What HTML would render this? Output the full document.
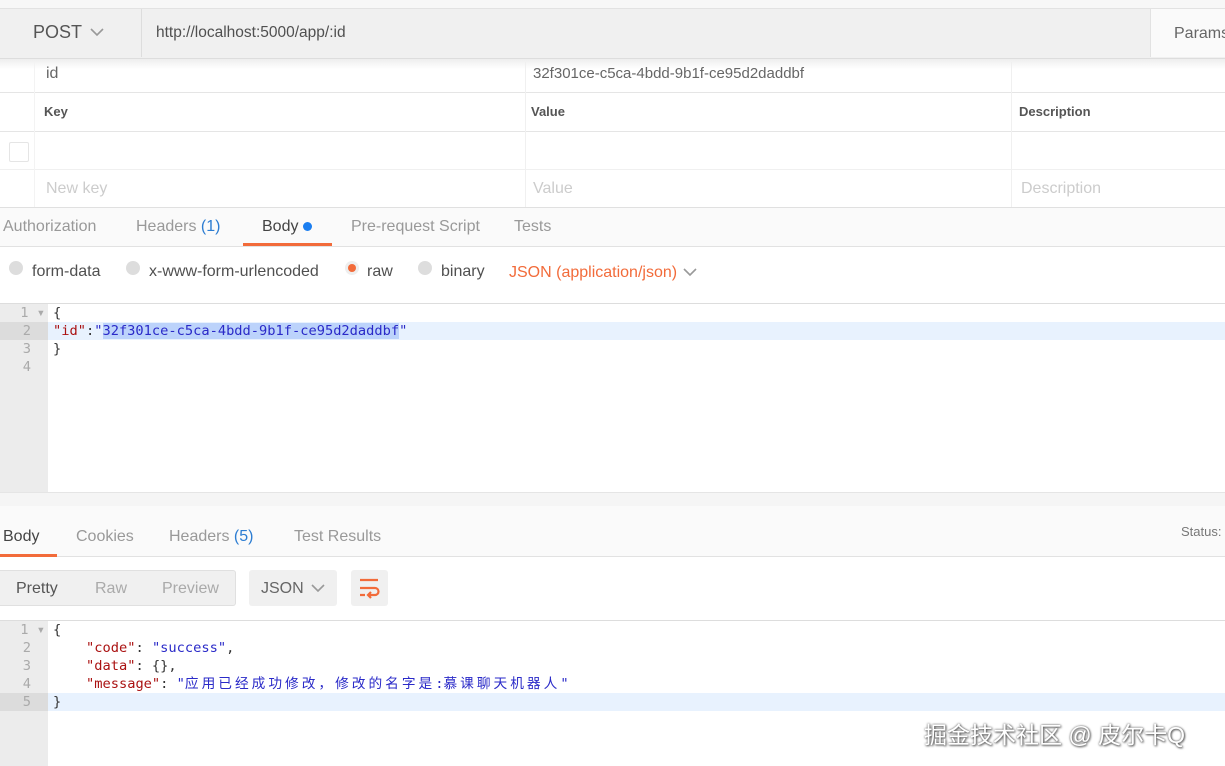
<!DOCTYPE html>
<html><head><meta charset="utf-8"><style>
body{margin:0;width:1225px;height:766px;overflow:hidden;background:#fff;font-family:"Liberation Sans","Noto Sans CJK SC",sans-serif;position:relative;font-size:16px;color:#505050}
.a{position:absolute}
.mono{font-family:"DejaVu Sans Mono","Liberation Mono","Noto Sans CJK SC",monospace;font-size:13.7px}
.k{color:#a11}.s{color:#2a2ac8}
.cj{letter-spacing:3px}
.ln{position:absolute;left:0;width:40px;text-align:right;color:#aaa}
</style></head><body>
<div class="a" style="left:0;top:0;width:1225px;height:8px;background:#f7f7f7"></div>
<div class="a" style="left:0;top:8px;width:1225px;height:49px;background:#f0f0f0;border-top:1px solid #e2e2e2;border-bottom:2px solid #ddd"></div>
<div class="a" style="left:33px;top:22px;font-size:18px;color:#555">POST</div>
<svg class="a" style="left:90px;top:27px" width="14" height="10"><path d="M1 2l6 6 6-6" stroke="#999" stroke-width="1.6" fill="none"/></svg>
<div class="a" style="left:141px;top:9px;width:1px;height:48px;background:#ddd"></div>
<div class="a" style="left:156px;top:24px;color:#505050;font-size:15.5px">http://localhost:5000/app/:id</div>
<div class="a" style="left:1150px;top:9px;width:75px;height:48px;background:#fafafa;border-left:1px solid #e2e2e2"></div>
<div class="a" style="left:1174px;top:25px;color:#666">Params</div>
<div class="a" style="left:0;top:59px;width:1225px;height:10px;background:linear-gradient(#eee,#fff)"></div>
<div class="a" style="left:46px;top:65px;color:#666">id</div>
<div class="a" style="left:533px;top:65px;color:#666;font-size:15px">32f301ce-c5ca-4bdd-9b1f-ce95d2daddbf</div>
<div class="a" style="left:0;top:92px;width:1225px;height:1px;background:#e5e5e5"></div>
<div class="a" style="left:0;top:131px;width:1225px;height:1px;background:#e5e5e5"></div>
<div class="a" style="left:0;top:169px;width:1225px;height:1px;background:#f0f0f0"></div>
<div class="a" style="left:0;top:207px;width:1225px;height:1px;background:#e0e0e0"></div>
<div class="a" style="left:34px;top:62px;width:1px;height:145px;background:#f3f3f3"></div>
<div class="a" style="left:525px;top:62px;width:1px;height:145px;background:#f0f0f0"></div>
<div class="a" style="left:1011px;top:62px;width:1px;height:145px;background:#f0f0f0"></div>
<div class="a" style="left:44px;top:104px;font-size:13px;font-weight:bold;color:#555">Key</div>
<div class="a" style="left:531px;top:104px;font-size:13px;font-weight:bold;color:#555">Value</div>
<div class="a" style="left:1019px;top:104px;font-size:13px;font-weight:bold;color:#555">Description</div>
<div class="a" style="left:9px;top:142px;width:18px;height:18px;border:1px solid #e5e5e5;border-radius:2px"></div>
<div class="a" style="left:46px;top:180px;color:#ccc">New key</div>
<div class="a" style="left:533px;top:180px;color:#ccc">Value</div>
<div class="a" style="left:1021px;top:180px;color:#ccc">Description</div>
<div class="a" style="left:0;top:208px;width:1225px;height:38px;background:#fafafa;border-bottom:1px solid #e2e2e2"></div>
<div class="a" style="left:3px;top:218px;color:#999">Authorization</div>
<div class="a" style="left:136px;top:218px;color:#999">Headers <span style="color:#2d7dd2">(1)</span></div>
<div class="a" style="left:262px;top:218px;color:#444">Body</div>
<div class="a" style="left:303px;top:222px;width:9px;height:9px;border-radius:50%;background:#1b7ef0"></div>
<div class="a" style="left:243px;top:243px;width:89px;height:3px;background:#f26b3a"></div>
<div class="a" style="left:351px;top:218px;color:#999">Pre-request Script</div>
<div class="a" style="left:514px;top:218px;color:#999">Tests</div>
<div class="a" style="left:9px;top:261px;width:14px;height:14px;border-radius:50%;background:#ddd"></div>
<div class="a" style="left:32px;top:263px">form-data</div>
<div class="a" style="left:126px;top:261px;width:14px;height:14px;border-radius:50%;background:#ddd"></div>
<div class="a" style="left:149px;top:263px">x-www-form-urlencoded</div>
<div class="a" style="left:345px;top:261px;width:14px;height:14px;border-radius:50%;background:#eee"></div>
<div class="a" style="left:348px;top:264px;width:8px;height:8px;border-radius:50%;background:#f26b3a"></div>
<div class="a" style="left:367px;top:263px">raw</div>
<div class="a" style="left:418px;top:261px;width:14px;height:14px;border-radius:50%;background:#ddd"></div>
<div class="a" style="left:441px;top:263px">binary</div>
<div class="a" style="left:509px;top:264px;color:#f26b3a">JSON (application/json)</div>
<svg class="a" style="left:683px;top:267px" width="14" height="10"><path d="M1 2l6 6 6-6" stroke="#999" stroke-width="1.6" fill="none"/></svg>
<div class="a" style="left:0;top:303px;width:1225px;height:1px;background:#ddd"></div>
<div class="a" style="left:0;top:304px;width:48px;height:188px;background:#ececec"></div>
<div class="a" style="left:48px;top:322px;width:1177px;height:18px;background:#e8f2fe"></div>
<div class="a" style="left:0;top:322px;width:48px;height:18px;background:#dcdcdc"></div>
<div class="a" style="left:103px;top:323px;width:296px;height:16px;background:#bcd3fb"></div>
<div class="mono a" style="left:0;top:304px;width:1225px;line-height:18px">
<div class="ln" style="top:0;width:45px">1 ▾</div><div class="ln" style="top:18px;width:31px">2</div><div class="ln" style="top:36px;width:31px">3</div><div class="ln" style="top:54px;width:31px">4</div>
<div class="a" style="left:53px;top:0;color:#333">{</div>
<div class="a" style="left:53px;top:18px;color:#333"><span class="k">"id"</span>:<span class="s">"32f301ce-c5ca-4bdd-9b1f-ce95d2daddbf"</span></div>
<div class="a" style="left:53px;top:36px;color:#333">}</div>
</div>
<div class="a" style="left:0;top:492px;width:1225px;height:13px;background:#f5f5f5;border-top:1px solid #e5e5e5;border-bottom:1px solid #e5e5e5"></div>
<div class="a" style="left:0;top:506px;width:1225px;height:50px;background:#fafafa;border-bottom:1px solid #e2e2e2"></div>
<div class="a" style="left:3px;top:528px;color:#444">Body</div>
<div class="a" style="left:0;top:554px;width:57px;height:3px;background:#f26b3a"></div>
<div class="a" style="left:76px;top:528px;color:#999">Cookies</div>
<div class="a" style="left:169px;top:528px;color:#999">Headers <span style="color:#2d7dd2">(5)</span></div>
<div class="a" style="left:294px;top:528px;color:#999">Test Results</div>
<div class="a" style="left:1181px;top:524px;font-size:13px;color:#777">Status:</div>
<div class="a" style="left:0;top:570px;width:236px;height:36px;background:#f0f0f0;border:1px solid #e0e0e0;border-left:0;border-radius:0 3px 3px 0;box-sizing:border-box"></div>
<div class="a" style="left:16px;top:580px;color:#555">Pretty</div>
<div class="a" style="left:95px;top:580px;color:#aaa">Raw</div>
<div class="a" style="left:162px;top:580px;color:#aaa">Preview</div>
<div class="a" style="left:249px;top:570px;width:88px;height:36px;background:#f0f0f0;border-radius:3px"></div>
<div class="a" style="left:261px;top:580px;color:#666">JSON</div>
<svg class="a" style="left:311px;top:583px" width="14" height="10"><path d="M1 2l6 6 6-6" stroke="#999" stroke-width="1.6" fill="none"/></svg>
<div class="a" style="left:351px;top:570px;width:37px;height:36px;background:#f0f0f0;border-radius:3px"></div>
<svg class="a" style="left:358px;top:577px" width="24" height="22"><path d="M2 3h18M2 11h15a3.5 3.5 0 0 1 0 7h-6M13 15l-3 3 3 3M2 18h5" stroke="#f26b3a" stroke-width="2.2" fill="none"/></svg>
<div class="a" style="left:0;top:620px;width:1225px;height:1px;background:#ddd"></div>
<div class="a" style="left:0;top:621px;width:48px;height:145px;background:#ececec"></div>
<div class="a" style="left:48px;top:693px;width:1177px;height:18px;background:#e8f2fe"></div>
<div class="a" style="left:0;top:693px;width:48px;height:18px;background:#dcdcdc"></div>
<div class="mono a" style="left:0;top:621px;width:1225px;line-height:18px">
<div class="ln" style="top:0;width:45px">1 ▾</div><div class="ln" style="top:18px;width:31px">2</div><div class="ln" style="top:36px;width:31px">3</div><div class="ln" style="top:54px;width:31px">4</div><div class="ln" style="top:72px;width:31px">5</div>
<div class="a" style="left:53px;top:0;color:#333">{</div>
<div class="a" style="left:86px;top:18px;color:#333"><span class="k">"code"</span>: <span class="s">"success"</span>,</div>
<div class="a" style="left:86px;top:36px;color:#333"><span class="k">"data"</span>: {},</div>
<div class="a" style="left:86px;top:54px;color:#333"><span class="k">"message"</span>: <span class="s">"<span class="cj">应用已经成功修改，修改的名字是</span>:<span class="cj">慕课聊天机器人</span>"</span></div>
<div class="a" style="left:53px;top:72px;color:#333">}</div>
</div>
<div class="a" style="left:924px;top:716px;font-size:23px;color:#fff;text-shadow:0 0 2px #555,1px 1px 2px #555">掘金技术社区 @ 皮尔卡Q</div>
</body></html>
